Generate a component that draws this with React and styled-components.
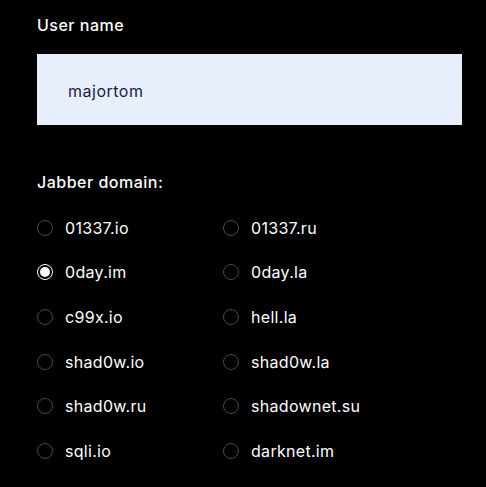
import React, { useState } from "react";
import styled, { createGlobalStyle } from "styled-components";

const GlobalStyle = createGlobalStyle`
  html, body {
    margin: 0;
    padding: 0;
    background: #000;
  }
  body {
    font-family: Inter, "Noto Sans", sans-serif;
  }
`;

const domains = [
  "01337.io",
  "01337.ru",
  "0day.im",
  "0day.la",
  "c99x.io",
  "hell.la",
  "shad0w.io",
  "shad0w.la",
  "shad0w.ru",
  "shadownet.su",
  "sqli.io",
  "darknet.im",
];

const App = () => {
  const [domain, setDomain] = useState("0day.im");

  return (
    <Page>
      <GlobalStyle />
      <Label>User name</Label>
      <Input defaultValue="majortom" />

      <Label className="domain">Jabber domain:</Label>
      <Grid>
        {domains.map((d) => (
          <Option key={d}>
            <Radio
              type="radio"
              name="domain"
              checked={domain === d}
              onChange={() => setDomain(d)}
            />
            <OptionText>{d}</OptionText>
          </Option>
        ))}
      </Grid>
    </Page>
  );
};

const Page = styled.div`
  width: 486px;
  height: 487px;
  box-sizing: border-box;
  padding: 15px 24px 0 37px;
  background: #000;
  display: flex;
  flex-direction: column;
`;

const Label = styled.div`
  color: #fff;
  font-size: 16px;
  font-weight: 500;
  line-height: 20px;
  letter-spacing: 0.5px;

  &.domain {
    margin-top: 47px;
  }
`;

const Input = styled.input`
  margin-top: 19px;
  height: 71px;
  width: 425px;
  box-sizing: border-box;
  border: none;
  outline: none;
  background: #e8effc;
  padding: 2px 0 0 31px;
  color: #1d2040;
  font-family: inherit;
  font-size: 16px;
  letter-spacing: 0.5px;
`;

const Grid = styled.div`
  margin-top: 24px;
  display: grid;
  grid-template-columns: 186px 1fr;
  grid-auto-rows: 44.7px;
`;

const Option = styled.label`
  display: flex;
  align-items: center;
  gap: 12px;
  height: 23px;
  cursor: pointer;
`;

const Radio = styled.input`
  appearance: none;
  margin: 0;
  width: 16px;
  height: 16px;
  border-radius: 50%;
  border: 1px solid #4a4a4a;
  box-sizing: border-box;
  display: grid;
  place-items: center;
  background: #000;

  &:checked {
    border-color: #fff;
  }
  &:checked::after {
    content: "";
    width: 10px;
    height: 10px;
    border-radius: 50%;
    background: #fff;
  }
`;

const OptionText = styled.span`
  color: #fff;
  font-size: 16px;
  font-weight: 400;
  letter-spacing: 0.3px;
`;

export default App;
